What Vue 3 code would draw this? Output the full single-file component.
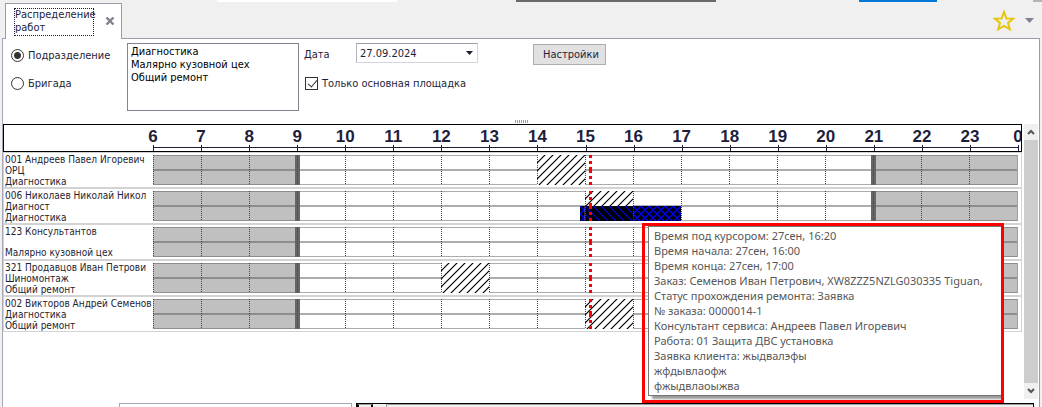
<script setup>
import { ref } from 'vue'

const mode = ref('dept')
const mainOnly = ref(true)
const date = ref('27.09.2024')
const departments = ['Диагностика', 'Малярно кузовной цех', 'Общий ремонт']

const START = 6
const SPAN = 18
const NOW = 15.1
const hours = Array.from({ length: SPAN }, (_, i) => START + i)

const staff = [
  { name: '001 Андреев Павел Игоревич', post: 'ОРЦ', dept: 'Диагностика', busy: [{ from: 14, to: 15, kind: 'hatch' }] },
  {
    name: '006 Николаев Николай Никол',
    post: 'Диагност',
    dept: 'Диагностика',
    busy: [
      { from: 15, to: 16, kind: 'hatch upper' },
      { from: 14.9, to: 15, kind: 'order cross' },
      { from: 15, to: 16, kind: 'order diag' },
      { from: 16, to: 17, kind: 'order cross' }
    ]
  },
  { name: '123 Консультантов', post: '', dept: 'Малярно кузовной цех', busy: [] },
  { name: '321 Продавцов Иван Петрови', post: 'Шиномонтаж', dept: 'Общий ремонт', busy: [{ from: 12, to: 13, kind: 'hatch' }] },
  { name: '002 Викторов Андрей Семенов', post: 'Диагностика', dept: 'Общий ремонт', busy: [{ from: 15, to: 16, kind: 'hatch' }] }
]

const hint = [
  'Время под курсором: 27сен, 16:20',
  'Время начала: 27сен, 16:00',
  'Время конца: 27сен, 17:00',
  'Заказ: Семенов Иван Петрович, XW8ZZZ5NZLG030335 Tiguan,',
  'Статус прохождения ремонта: Заявка',
  '№ заказа: 0000014-1',
  'Консультант сервиса: Андреев Павел Игоревич',
  'Работа: 01 Защита ДВС установка',
  'Заявка клиента: жыдвалэфы',
  'жфдывлаофж',
  'фжыдвлаоыжва'
]

const at = (h) => ((h - START) / SPAN) * 100 + '%'
const span = (a, b) => ({ left: at(a), width: ((b - a) / SPAN) * 100 + '%' })
</script>

<template>
  <div class="window">
    <div class="topline"><i></i><i class="white"></i><i></i><i class="dark"></i><i></i><i class="blue"></i><i></i><i class="grey"></i></div>

    <header class="tabs">
      <div class="tab">
        <a href="#" class="tab-title">Распределение работ</a>
        <button class="close" aria-label="Закрыть">
          <svg width="10" height="8" viewBox="0 0 10 8"><path d="M1.5 0.5L8.5 7.5M8.5 0.5L1.5 7.5" stroke="#838390" stroke-width="2.4" /></svg>
        </button>
      </div>
      <div class="tools">
        <button aria-label="Избранное">
          <svg width="22" height="22" viewBox="0 0 22 22"><path d="M11 2L13.4 8.4L20.2 8.6L15 12.9L16.8 19.3L11 16L5.2 19.3L7 12.9L1.8 8.6L8.6 8.4Z" fill="none" stroke="#e6c60d" stroke-width="2" /></svg>
        </button>
        <button aria-label="Меню">
          <svg width="9" height="5" viewBox="0 0 9 5"><path d="M0 0H9L4.5 5Z" fill="#808090" /></svg>
        </button>
      </div>
    </header>

    <main class="page">
      <section class="controls">
        <div class="modes">
          <label><input v-model="mode" type="radio" name="mode" value="dept" />Подразделение</label>
          <label><input v-model="mode" type="radio" name="mode" value="team" />Бригада</label>
        </div>
        <select class="list" size="4" multiple aria-label="Подразделения">
          <option v-for="d in departments" :key="d">{{ d }}</option>
        </select>
        <div class="params">
          <div class="date-row">
            <label for="date">Дата</label>
            <div class="date">
              <input id="date" v-model="date" type="text" />
              <button aria-label="Выбрать дату">
                <svg width="7" height="4" viewBox="0 0 7 4"><path d="M0 0H7L3.5 4Z" fill="#1e1e32" /></svg>
              </button>
            </div>
          </div>
          <label class="check"><input v-model="mainOnly" type="checkbox" />Только основная площадка</label>
        </div>
        <button class="settings">Настройки</button>
      </section>

      <div class="splitter"><i></i></div>

      <section class="board">
        <div class="chart">
          <div class="scale">
            <div class="axis">
              <div v-for="h in hours" :key="h" class="hour"><b>{{ h }}</b></div>
              <div class="hour last"><b>0</b></div>
            </div>
          </div>
          <div v-for="p in staff" :key="p.name" class="row">
            <div class="who"><span>{{ p.name }}</span><span>{{ p.post }}</span><span>{{ p.dept }}</span></div>
            <div class="track">
              <div class="off" :style="span(6, 9)"></div>
              <div class="off" :style="span(21, 24)"></div>
              <div class="lane"></div>
              <div class="lane"></div>
              <div class="edge" :style="{ left: at(9) }"></div>
              <div class="edge" :style="{ left: at(21) }"></div>
              <svg v-for="(b, i) in p.busy" :key="i" class="busy" :class="b.kind" :style="span(b.from, b.to)">
                <rect width="100%" height="100%" :fill="b.kind.startsWith('hatch') ? 'url(#slash)' : b.kind === 'order diag' ? 'url(#back)' : 'url(#cross)'" />
              </svg>
              <div class="grid"><i v-for="h in hours" :key="h"></i></div>
              <div class="now" :style="{ left: at(NOW) }"><i></i><i></i></div>
            </div>
          </div>
        </div>

        <div class="scroll">
          <button aria-label="Вверх"><svg width="8" height="6" viewBox="0 0 8 6"><path d="M1 5L4 2L7 5" fill="none" stroke="#555" stroke-width="2" /></svg></button>
          <div class="thumb"></div>
          <button aria-label="Вниз"><svg width="8" height="6" viewBox="0 0 8 6"><path d="M1 1L4 4L7 1" fill="none" stroke="#555" stroke-width="2" /></svg></button>
        </div>

        <div class="callout" role="tooltip">
          <div class="hint"><span v-for="t in hint" :key="t">{{ t }}</span></div>
        </div>
      </section>

      <footer class="lower">
        <div class="pane"></div>
        <div class="table"><i class="mark"></i><i class="cols"></i><i class="rest"></i></div>
      </footer>
    </main>

    <svg class="defs" aria-hidden="true">
      <defs>
        <pattern id="slash" width="8" height="8" patternUnits="userSpaceOnUse">
          <rect width="8" height="8" fill="#fff" />
          <path d="M-1 9L9 -1M-1 1L1 -1M7 9L9 7" stroke="#000" stroke-width="1.2" />
        </pattern>
        <pattern id="back" width="8" height="8" patternUnits="userSpaceOnUse">
          <rect width="8" height="8" fill="#000008" />
          <path d="M-1 -1L9 9M-1 7L1 9M7 -1L9 1" stroke="#0000e0" stroke-width="1.2" />
        </pattern>
        <pattern id="cross" width="8" height="8" patternUnits="userSpaceOnUse">
          <rect width="8" height="8" fill="#000008" />
          <path d="M-1 -1L9 9M-1 9L9 -1M-1 7L1 9M7 -1L9 1M-1 1L1 -1M7 9L9 7" stroke="#0000ff" stroke-width="1.4" />
        </pattern>
      </defs>
    </svg>
  </div>
</template>

<style>
html, body { margin: 0; height: 100%; }
#app { height: 100%; }
</style>

<style scoped>
* { box-sizing: border-box; }
button { padding: 0; border: 0; background: none; font: inherit; color: inherit; display: flex; align-items: center; justify-content: center; }
input { margin: 0; font: inherit; color: inherit; }
svg { display: block; }
.window {
  min-height: 100%;
  display: flex;
  flex-direction: column;
  overflow: hidden;
  background: #f0f0f0;
  color: #1e1e3c;
  font: 11px/13px "DejaVu Sans Condensed", "DejaVu Sans", sans-serif;
}
.topline { display: grid; grid-template-columns: 217fr 180fr 119fr 200fr 143fr 78fr 96fr 9px; height: 1px; }
.white { background: #fff; }
.dark { background: #6b6969; }
.blue { background: #0078d7; }
.grey { background: #b4b4b4; height: 2px; }

.tabs { display: flex; justify-content: space-between; height: 37px; padding: 2px 8px 0 5px; }
.tab {
  position: relative;
  z-index: 1;
  display: flex;
  justify-content: space-between;
  width: 117px;
  height: 36px;
  padding: 4px 6px 0 8px;
  border: 1px solid #9c9ca8;
  border-bottom: 0;
  background: #fff;
}
.tab-title { width: 80px; height: 28px; padding-left: 1px; outline: 1px dotted #1e1e3c; outline-offset: -1px; color: inherit; text-decoration: none; }
.close { width: 10px; height: 8px; margin-top: 9px; }
.tools { display: flex; gap: 10px; align-items: center; }

.page {
  flex: 1;
  display: flex;
  flex-direction: column;
  margin: 0 2px 0 2px;
  border: 1px solid #9c9ca8;
  border-bottom: 0;
  border-left-color: #a8a8b4;
  background: #fff;
}
.controls { display: flex; align-items: flex-start; height: 80px; padding: 4px 8px 0; }
.modes { display: flex; flex-direction: column; gap: 15px; width: 116px; padding-top: 6px; }
.modes label, .check { display: flex; align-items: center; gap: 4px; white-space: nowrap; }
input[type='radio'] { appearance: none; width: 13px; height: 13px; border: 1px solid #333; border-radius: 50%; background: #fff; }
input[type='radio']:checked { background: radial-gradient(circle, #333 3px, #fff 4px); }
input[type='checkbox'] {
  appearance: none;
  width: 13px;
  height: 13px;
  border: 1px solid #333;
  background: #fff;
}
input[type='checkbox']:checked::after {
  content: '';
  display: block;
  width: 4px;
  height: 8px;
  margin: 0 0 0 4px;
  border: solid #333;
  border-width: 0 1px 1px 0;
  transform: rotate(40deg);
}
.list { width: 172px; height: 68px; padding: 1px 0; border: 1px solid #838390; border-radius: 0; background: #fff; color: #000; font: inherit; overflow: hidden; outline: 0; }
.list option { min-height: 13px; padding: 0 3px; font: inherit; }
.params { display: flex; flex-direction: column; gap: 14px; width: 234px; padding-left: 5px; }
.date-row { display: flex; align-items: center; }
.date-row label { width: 52px; padding-top: 2px; }
.date { display: flex; width: 122px; height: 20px; border: 1px solid #d4d4dc; border-top-color: #9c9ca8; border-left-color: #b4b4c0; }
.date input { flex: 1; min-width: 0; padding: 0 3px; border: 0; outline: 0; background: none; }
.date button { width: 16px; }
.check input { margin-left: 1px; }
.settings { width: 73px; height: 21px; margin-top: 1px; padding-left: 3px; border: 1px solid #adadad; background: #e1e1e1; }
.splitter { display: flex; justify-content: center; height: 5px; padding-top: 1px; }
.splitter i { width: 13px; height: 3px; background: repeating-linear-gradient(90deg, #9c9ca8 0 1px, transparent 1px 2px); }

.board { position: relative; display: flex; height: 275px; }
.chart { flex: 1; min-width: 0; }
.scale { height: 28px; border: 1px solid #000; padding: 0 3px 0 149px; overflow: hidden; }
.axis { position: relative; display: grid; grid-template-columns: repeat(18, 1fr); height: 26px; }
.hour { position: relative; display: flex; align-items: flex-start; padding-top: 2px; height: 26px; }
.hour b { width: 0; display: flex; justify-content: center; font: bold 17px/20px "Liberation Sans", Arial, sans-serif; }
.hour::before { content: ''; position: absolute; left: 0; right: 0; top: 22px; height: 1px; background: #1e1e3c; }
.hour::after { content: ''; position: absolute; left: 0; top: 20px; height: 6px; width: 1px; background: #1e1e3c; }
.hour.last { position: absolute; left: 100%; width: 1px; }

.row { display: flex; height: 36px; padding: 2px 3px 2px 0; border: 1px solid #d3d3d3; }
.who { display: flex; flex-direction: column; justify-content: space-between; width: 149px; height: 32px; padding-left: 1px; margin-top: -1px; color: #1e1e32; font-size: 10px; line-height: 11px; white-space: nowrap; }
.who span { height: 11px; }
.track { position: relative; flex: 1; height: 30px; border-right: 1px solid #a0a0a0; }
.off { position: absolute; top: 0; bottom: 0; background: #c0c0c0; }
.lane { position: relative; height: 15px; border: 1px solid rgba(90, 90, 90, 0.5); border-width: 1px 0; }
.edge { position: absolute; top: 0; bottom: 0; width: 5px; margin-left: -2px; background: #666; }
.grid { position: absolute; inset: 0; display: grid; grid-template-columns: repeat(18, 1fr); }
.grid i { background: repeating-linear-gradient(#444 0 1px, transparent 1px 2px) left / 1px 100% no-repeat; }
.busy { position: absolute; top: 0; height: 30px; }
.upper { height: 15px; }
.order { top: 15px; height: 15px; }
.now { position: absolute; top: 0; width: 3px; margin-left: -1px; }
.now i { display: block; height: 15px; background: repeating-linear-gradient(#f00 0 3px, transparent 3px 6px); }

.scroll { display: flex; flex-direction: column; width: 14px; margin: 0 1px 0 2px; background: #f0f0f0; }
.scroll button { height: 16px; }
.thumb { flex: 1; background: #cdcdcd; }

.callout { position: absolute; right: 35px; top: 99px; width: 362px; height: 180px; border: 3px solid #f00; padding: 0 0 0 3px; overflow: hidden; }
.hint {
  display: flex;
  flex-direction: column;
  height: 170px;
  padding: 1px 0 0 5px;
  border: 1px solid #767676;
  border-right: 0;
  background: #fff;
  box-shadow: 4px 3px 2px rgba(0, 0, 0, 0.4);
  color: #575757;
  font: 11px/15px "Noto Sans", "Open Sans", sans-serif;
  white-space: nowrap;
}

.lower { flex: 1; display: flex; gap: 4px; min-height: 4px; margin-top: 4px; padding: 0 5px 0 116px; }
.pane { width: 233px; border: 1px solid #a8a8b4; border-bottom: 0; }
.table { flex: 1; display: flex; border: 1px solid #000; border-bottom: 0; background: #f0f0f0; }
.table i { border-top: 1px solid #a0a0a0; }
.mark { width: 16px; border: solid #000; border-width: 1px 2px 0; }
.cols { width: 343px; margin-left: 13px; border-left: 1px solid #a0a0a0; }
.rest { flex: 1; border-top-color: #f0f0f0; }
.defs { position: absolute; width: 0; height: 0; }
</style>
